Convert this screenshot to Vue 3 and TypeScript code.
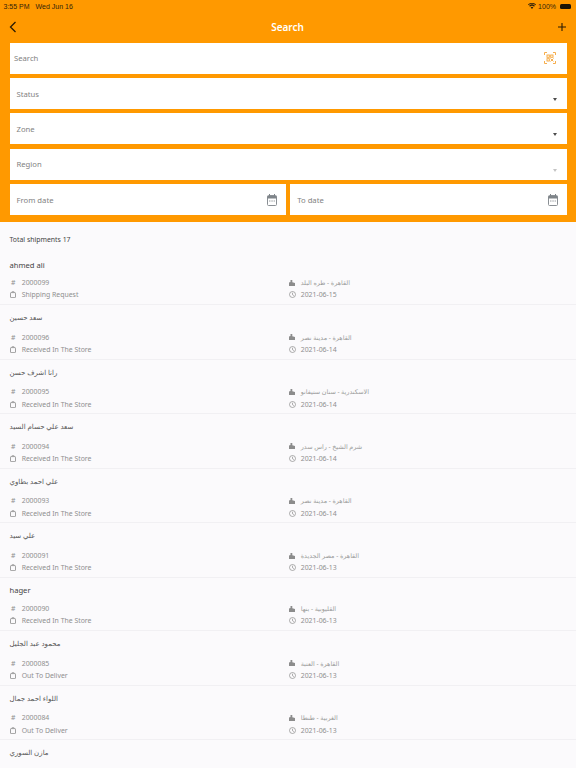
<script setup lang="ts">
interface Shipment {
  name: string;
  code: string;
  status: string;
  place: string;
  date: string;
  latin?: boolean;
}

const shipments: Shipment[] = [
  { name: "ahmed ali", code: "2000099", status: "Shipping Request", place: "القاهرة - طره البلد", date: "2021-06-15", latin: true },
  { name: "سعد حسين", code: "2000096", status: "Received In The Store", place: "القاهرة - مدينة نصر", date: "2021-06-14" },
  { name: "رانا اشرف حسن", code: "2000095", status: "Received In The Store", place: "الاسكندرية - سنان ستيفانو", date: "2021-06-14" },
  { name: "سعد علي حسام السيد", code: "2000094", status: "Received In The Store", place: "شرم الشيخ - راس سدر", date: "2021-06-14" },
  { name: "علي احمد بطاوي", code: "2000093", status: "Received In The Store", place: "القاهرة - مدينة نصر", date: "2021-06-14" },
  { name: "علي سيد", code: "2000091", status: "Received In The Store", place: "القاهرة - مصر الجديدة", date: "2021-06-13" },
  { name: "hager", code: "2000090", status: "Received In The Store", place: "القليوبية - بنها", date: "2021-06-13", latin: true },
  { name: "محمود عبد الجليل", code: "2000085", status: "Out To Deliver", place: "القاهرة - العتبة", date: "2021-06-13" },
  { name: "اللواء احمد جمال", code: "2000084", status: "Out To Deliver", place: "الغربية - طنطا", date: "2021-06-13" },
  { name: "مازن السوري", code: "", status: "", place: "", date: "" },
];

const selects = ["Status", "Zone", "Region"];
</script>

<template>
  <div class="page">
    <header class="top">
      <div class="statusbar">
        <span>3:55 PM</span>
        <span class="day">Wed Jun 16</span>
        <span class="spacer"></span>
        <svg width="8" height="6" viewBox="0 0 22 16">
          <path d="M11 16 7.400 12a5 5 0 0 1 7.200 0zM5.400 9.800 3.200 7.400a11 11 0 0 1 15.600 0l-2.200 2.400a8 8 0 0 0-11.200 0zM1.700 5.800 0 4a15.500 15.500 0 0 1 22 0l-1.700 1.800a13 13 0 0 0-18.600 0z" fill="#33230a" />
        </svg>
        <span>100%</span>
        <span class="battery"></span>
      </div>

      <div class="navbar">
        <svg width="8" height="12" viewBox="0 0 8 12">
          <path d="M6.500 1 1.500 6l5 5" fill="none" stroke="#2a1c05" stroke-width="1.300" />
        </svg>
        <span class="title">Search</span>
        <svg width="8" height="8" viewBox="0 0 8 8">
          <path d="M4 0v8M0 4h8" stroke="#2a1c05" stroke-width="1.100" />
        </svg>
      </div>

      <div class="filters">
        <div class="field search">
          <span>Search</span>
          <svg width="12" height="12" viewBox="0 0 12 12" fill="none" stroke="#f5a53a" stroke-width="0.9">
            <path d="M.5 3V.5H3M9 .5h2.500V3M11.500 9v2.500H9M3 11.500H.5V9" />
            <rect x="3" y="3" width="2.300" height="2.300" />
            <rect x="6.700" y="3" width="2.300" height="2.300" />
            <rect x="3" y="6.700" width="2.300" height="2.300" />
            <path d="M6.500 6.500 9.500 9.500M9.500 6.500 6.500 9.500" />
          </svg>
        </div>

        <div v-for="(label, i) in selects" :key="label" class="field select">
          <span>{{ label }}</span>
          <i class="caret" :class="{ faded: i === 2 }"></i>
        </div>

        <div class="dates">
          <div v-for="label in ['From date', 'To date']" :key="label" class="field">
            <span>{{ label }}</span>
            <svg width="10" height="12" viewBox="0 0 10 12" fill="none">
              <rect x=".5" y="1.500" width="9" height="10" rx="1" stroke="#8a8f94" />
              <path d="M.5 2h9v2.500H.5z" fill="#7f858a" />
              <path d="M2.500 0v2M7.500 0v2" stroke="#7f858a" />
              <path d="M2 7h1.500M4.300 7h1.500M6.600 7H8" stroke="#9a9ea2" />
            </svg>
          </div>
        </div>
      </div>
    </header>

    <main class="list">
      <p class="total">Total shipments 17</p>

      <section
        v-for="item in shipments"
        :key="item.name"
        class="row"
        :class="{ latin: item.latin }"
      >
        <h3 class="name">{{ item.name }}</h3>
        <div v-if="item.code" class="details">
          <div class="cell">
            <span class="slot">#</span>
            <span>{{ item.code }}</span>
          </div>
          <div class="cell">
            <span class="slot">
              <svg width="6" height="7" viewBox="0 0 6 7">
                <path d="M2 1.500V1a.6.6 0 0 1 .6-.6h.8A.6.6 0 0 1 4 1v.5" fill="none" stroke="#8a8a8a" stroke-width=".7" />
                <rect x=".5" y="1.600" width="5" height="5" rx=".6" fill="none" stroke="#8a8a8a" stroke-width=".8" />
              </svg>
            </span>
            <span>{{ item.status }}</span>
          </div>
          <div class="cell">
            <span class="slot">
              <svg width="6" height="6" viewBox="0 0 6 6">
                <path d="M0 6V2.500L1.500 2V0h1.800v2.300L6 3v3z" fill="#8c8c8c" />
              </svg>
            </span>
            <span class="place">{{ item.place }}</span>
          </div>
          <div class="cell">
            <span class="slot">
              <svg width="7" height="7" viewBox="0 0 7 7" fill="none" stroke="#8a8a8a" stroke-width=".7">
                <circle cx="3.500" cy="3.500" r="3" />
                <path d="M3.500 1.700v2l1.400.9" />
              </svg>
            </span>
            <span>{{ item.date }}</span>
          </div>
        </div>
      </section>
    </main>
  </div>
</template>

<style>
html,
body {
  margin: 0;
  background: #fbfafc;
}
</style>

<style scoped>
.page {
  width: 576px;
  height: 768px;
  overflow: hidden;
  font-family: "Noto Sans", "DejaVu Sans", sans-serif;
}

.top {
  height: 222px;
  background: #ff9900;
}

.statusbar {
  display: flex;
  align-items: center;
  gap: 2px;
  height: 12px;
  padding: 0 5px 0 3.500px;
  font-family: "Liberation Sans", sans-serif;
  font-size: 7px;
  color: #33230a;
}

.day {
  margin-left: 4px;
}

.spacer {
  flex: 1;
}

.battery {
  width: 11px;
  height: 5px;
  margin-left: 2px;
  background: #1c1405;
  border-radius: 1.500px;
}

.navbar {
  display: flex;
  align-items: center;
  justify-content: space-between;
  height: 30.700px;
  padding: 0 10px 0 9px;
}

.title {
  color: #fff;
  font-size: 10px;
  font-weight: 600;
}

.filters {
  display: flex;
  flex-direction: column;
  gap: 4.400px;
  margin: 0 9.500px;
}

.field {
  display: flex;
  align-items: center;
  justify-content: space-between;
  height: 31px;
  padding: 0 8.500px 0 7px;
  box-sizing: border-box;
  background: #fff;
  color: #828282;
  font-size: 7.700px;
}

.search {
  padding: 0 11px 0 4.500px;
}

.select {
  position: relative;
}

.caret {
  position: absolute;
  right: 10px;
  bottom: 8px;
  width: 0;
  height: 0;
  border-left: 2.500px solid transparent;
  border-right: 2.500px solid transparent;
  border-top: 3px solid #4c4c4c;
}

.caret.faded {
  border-top-color: #c4c4c4;
}

.dates {
  display: grid;
  grid-template-columns: 1fr 1fr;
  gap: 4.500px;
}

.list {
  color: #8f8f8f;
  font-size: 6.900px;
}

.total {
  margin: 0;
  padding: 12px 9.500px 0;
  height: 30px;
  box-sizing: border-box;
  color: #444;
  font-size: 6.900px;
  line-height: 12px;
}

.row {
  height: 54.600px;
  padding: 6px 9.500px 0;
  box-sizing: border-box;
  border-bottom: 1px solid #f1f0f3;
}

.row.latin {
  height: 53px;
  padding-top: 6.500px;
}

.name {
  margin: 0 0 6px;
  height: 14px;
  line-height: 14px;
  color: #555;
  font-size: 7px;
  font-weight: 400;
}

.latin .name {
  height: 12.500px;
  line-height: 12.500px;
  margin-bottom: 5.500px;
  color: #444;
  font-size: 7.600px;
}

.details {
  display: grid;
  grid-template-columns: 279px 1fr;
  grid-auto-flow: column;
  grid-template-rows: 12.300px 12.300px;
}

.cell {
  display: flex;
  align-items: center;
  gap: 4.800px;
  white-space: nowrap;
}

.slot {
  display: flex;
  align-items: center;
  justify-content: center;
  width: 7.400px;
  flex: none;
}

.place {
  color: #9a9a9a;
  font-size: 6.400px;
}
</style>
